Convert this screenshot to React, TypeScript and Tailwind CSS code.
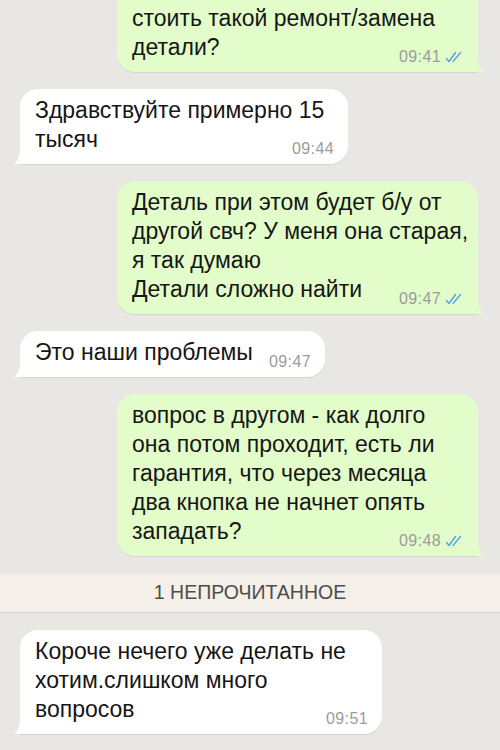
import type { ReactNode } from "react";
import clsx from "clsx";

type Msg = {
  out: boolean;
  time: string;
  lines: string[];
  width: string;
};

const messages: Msg[] = [
  {
    out: false,
    time: "09:44",
    lines: ["Здравствуйте примерно 15", "тысяч"],
    width: "w-[328px]",
  },
  {
    out: true,
    time: "09:47",
    lines: [
      "Деталь при этом будет б/у от",
      "другой свч? У меня она старая,",
      "я так думаю",
      "Детали сложно найти",
    ],
    width: "w-[361px]",
  },
  {
    out: false,
    time: "09:47",
    lines: ["Это наши проблемы"],
    width: "w-[305px]",
  },
  {
    out: true,
    time: "09:48",
    lines: [
      "вопрос в другом - как долго",
      "она потом проходит, есть ли",
      "гарантия, что через месяца",
      "два кнопка не начнет опять",
      "западать?",
    ],
    width: "w-[361px]",
  },
];

function Ticks() {
  return (
    <svg width="19" height="12" viewBox="0 0 19 12" className="ml-[4px]" fill="none">
      <path d="M1.5 7.5 L4 10.5 L10.5 1.5" stroke="#5aa2e6" strokeWidth="1.4" strokeLinecap="round" strokeLinejoin="round" />
      <path d="M8 10.5 L15.5 1.5" stroke="#5aa2e6" strokeWidth="1.4" strokeLinecap="round" />
    </svg>
  );
}

function Tail({ out }: { out: boolean }) {
  return (
    <svg
      width="14"
      height="16"
      viewBox="0 0 14 16"
      className={clsx("absolute bottom-0", out ? "right-[-6px] -scale-x-100" : "left-[-6px]")}
    >
      <path d="M6 0 C6 8 4 13 0 16 L14 16 L14 0 Z" fill={out ? "#e2fdca" : "#ffffff"} />
    </svg>
  );
}

function Bubble({
  out,
  time,
  width,
  className,
  children,
}: {
  out: boolean;
  time: string;
  width: string;
  className?: string;
  children: ReactNode;
}) {
  return (
    <div
      className={clsx(
        "relative rounded-[18px] pl-[15px] pr-[13px] pt-[7px] pb-[10px] text-[23px] leading-[29px] text-[#161616] whitespace-nowrap shadow-[0_1px_0.5px_rgba(0,0,0,0.08)]",
        width,
        out ? "self-end mr-[22px] bg-[#e2fdca] rounded-br-none" : "self-start ml-[20px] bg-white rounded-bl-none",
        className
      )}
    >
      {children}
      <span className="absolute right-[14px] bottom-[7px] flex items-center text-[16px] leading-[16px] text-[#9b9b9b] tracking-[0.4px]">
        {time}
        {out ? <Ticks /> : null}
      </span>
      <Tail out={out} />
    </div>
  );
}

export default function App() {
  return (
    <div className="w-[500px] h-[750px] overflow-hidden bg-[#e9e7e3] flex flex-col gap-[17px] font-['Liberation_Sans',Arial,sans-serif]">
      <Bubble out time="09:41" width="w-[361px]" className="-mt-[29px] pt-[33px]">
        <div>стоить такой ремонт/замена</div>
        <div>детали?</div>
      </Bubble>

      {messages.map((m, i) => (
        <Bubble key={i} out={m.out} time={m.time} width={m.width}>
          {m.lines.map((line) => (
            <div key={line}>{line}</div>
          ))}
        </Bubble>
      ))}

      <div className="h-[40px] flex items-center justify-center bg-[#f4efe9] border-t border-[#ebe6e0] border-b border-b-[#d5d2cd] text-[19.5px] text-[#4d4d4d]">
        1 НЕПРОЧИТАННОЕ
      </div>

      <Bubble out={false} time="09:51" width="w-[362px]">
        <div>Короче нечего уже делать не</div>
        <div>хотим.слишком много</div>
        <div>вопросов</div>
      </Bubble>
    </div>
  );
}
